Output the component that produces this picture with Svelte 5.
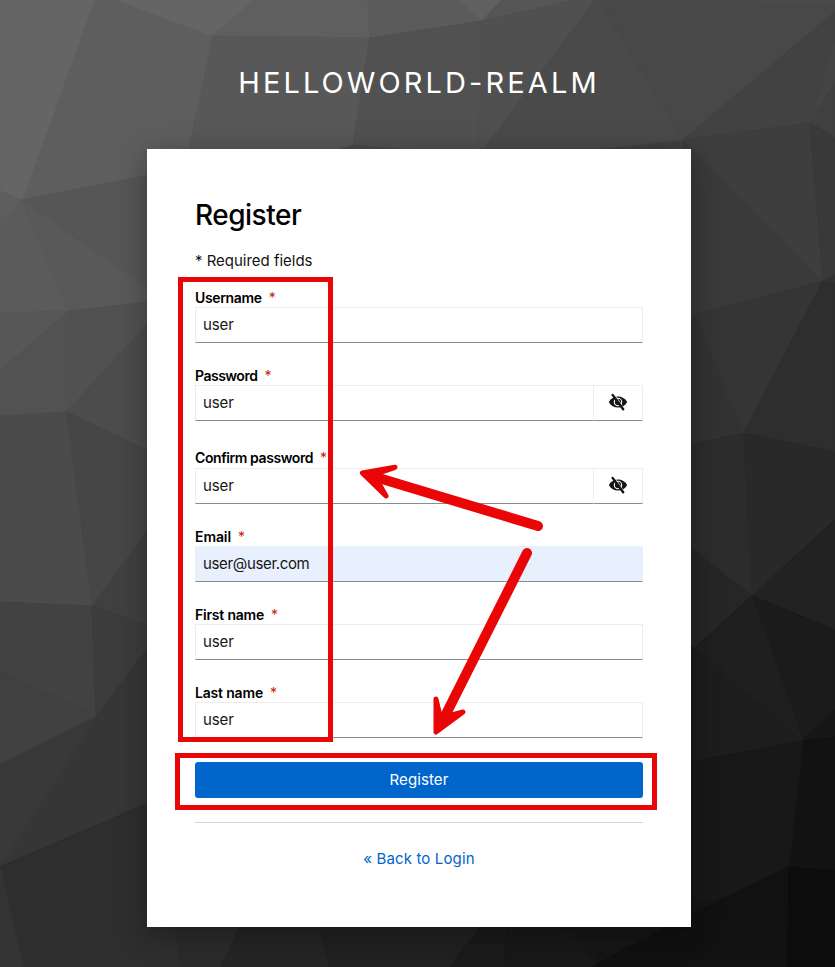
<script>
  const facets = [
    ['300,140 480,140 480,165 300,165', '#4a4a4a'],
    ['480,146 600,146 683,138 692,160 480,165', '#404040'],
    ['94,0 117,0 213,36 180,190 160,173 22,200', '#5e5e5e'],
    ['0,0 94,0 22,200 0,191', '#656565'],
    ['117,0 254,0 213,36', '#656565'],
    ['254,0 368,0 370,38 213,36', '#5f5f5f'],
    ['368,0 460,0 482,21 370,38', '#5b5b5b'],
    ['460,0 502,0 482,21', '#606060'],
    ['213,36 370,38 353,144 300,162 187,162', '#585858'],
    ['370,38 482,21 478,154 353,144', '#515151'],
    ['482,21 502,0 575,0', '#565656'],
    ['482,21 575,0 595,0 480,155 478,155', '#505050'],
    ['595,0 599,0 683,140 560,152 480,155', '#4a4a4a'],
    ['599,0 715,0 835,3 835,12 683,140', '#484848'],
    ['715,0 835,0 835,3', '#4b4b4b'],
    ['683,140 835,12 835,42 810,123', '#424242'],
    ['835,42 835,83 810,123', '#444444'],
    ['810,123 835,83 835,138', '#404040'],
    ['683,140 823,281 695,315 680,330 684,149', '#3a3a3a'],
    ['683,140 810,123 823,281', '#3e3e3e'],
    ['810,123 835,138 835,275 823,281', '#393939'],
    ['695,315 744,433 680,447 680,330', '#323232'],
    ['823,281 695,315 744,433', '#353535'],
    ['823,281 835,275 835,284', '#333333'],
    ['823,281 835,284 835,452 744,433', '#2e2e2e'],
    ['744,433 752,596 680,540 680,447', '#2c2c2c'],
    ['744,433 835,452 835,520 752,596', '#292929'],
    ['752,596 835,520 835,630', '#222222'],
    ['680,540 752,596 695,648 680,630', '#262626'],
    ['752,596 835,630 835,710 803,741', '#1b1b1b'],
    ['695,648 803,741 680,764 680,660', '#1d1d1d'],
    ['752,596 803,741 695,648', '#1f1f1f'],
    ['803,741 835,710 835,737', '#171717'],
    ['803,741 835,737 835,871 789,867', '#121212'],
    ['803,741 789,867 680,919 680,764', '#181818'],
    ['22,200 0,221 0,313 69,311', '#5b5b5b'],
    ['0,191 22,200 0,221', '#5e5e5e'],
    ['22,200 69,311 160,301 160,296', '#595959'],
    ['22,200 160,173 160,296', '#565656'],
    ['0,313 69,311 0,371', '#575757'],
    ['0,371 69,311 67,412 0,416', '#525252'],
    ['69,311 160,301 160,312 67,412', '#515151'],
    ['67,412 160,310 160,457', '#4c4c4c'],
    ['0,416 67,412 92,606 0,602', '#4b4b4b'],
    ['67,412 160,457 160,515 92,606', '#464646'],
    ['0,602 92,606 96,717 0,670', '#424242'],
    ['0,670 96,717 0,765', '#404040'],
    ['92,606 160,515 160,630', '#404040'],
    ['92,606 160,630 160,633 96,717', '#3c3c3c'],
    ['96,717 160,633 160,798 0,867', '#363636'],
    ['0,765 96,717 0,867', '#393939'],
    ['0,867 160,798 173,900 181,967 23,967', '#2e2e2e'],
    ['0,867 23,967 0,967', '#343434'],
    ['173,900 253,900 221,967 181,967', '#2b2b2b'],
    ['253,900 312,900 330,967 221,967', '#252525'],
    ['312,900 500,900 450,967 330,967', '#212121'],
    ['500,900 510,900 504,967 450,967', '#1b1b1b'],
    ['510,900 540,900 598,963 597,967 504,967', '#191919'],
    ['540,900 604,900 598,963', '#171717'],
    ['604,900 720,900 598,963', '#161616'],
    ['789,867 788,967 592,967 680,920', '#111111'],
    ['789,867 835,871 835,967 788,967', '#0d0d0d']
  ];

  const fields = [
    { label: 'Username', value: 'user', tracking: -0.35 },
    { label: 'Password', value: 'user', tracking: -0.5, secret: true },
    { label: 'Confirm password', value: 'user', tracking: -0.42, secret: true },
    { label: 'Email', value: 'user@user.com', tracking: -0.1, filled: true },
    { label: 'First name', value: 'user', tracking: -0.2 },
    { label: 'Last name', value: 'user', tracking: -0.18 }
  ];
</script>

<div class="page">
  <svg class="backdrop" viewBox="0 0 835 967" aria-hidden="true">
    {#each facets as [points, color]}
      <polygon {points} fill={color} stroke={color} stroke-width="1.2" stroke-linejoin="round" />
    {/each}
  </svg>

  <header>helloworld-realm</header>

  <main>
    <h1>Register</h1>
    <p class="required">* Required fields</p>
    <form onsubmit={(e) => e.preventDefault()}>
      {#each fields as f, i}
        <div class="group" class:confirm={i === 2}>
          <div class="label">
            <label for={'f' + i} style:letter-spacing={f.tracking + 'px'}>{f.label}</label><span class="star">*</span>
          </div>
          <div class="row">
            <input id={'f' + i} class:filled={f.filled} class:short={!f.filled} type="text" value={f.value} />
            {#if f.secret}
              <button class="eye" type="button" aria-label="Show password">
                <svg width="20" height="18" viewBox="0 0 20 18">
                  <path d="M.8 9C2.8 5.2 6.3 3.4 10 3.4S17.2 5.2 19.2 9C17.2 12.8 13.7 14.6 10 14.6S2.8 12.8.8 9Z" fill="#151515" />
                  <circle cx="10" cy="9" r="3.7" fill="none" stroke="#fff" stroke-width="1.1" />
                  <path d="M8.6 8.7A1.8 1.8 0 0 1 10.4 7.2" fill="none" stroke="#fff" stroke-width=".8" />
                  <path d="M6.5 1.2L16.5 16.2" stroke="#fff" stroke-width=".8" />
                  <path d="M4.6 1.9L15.2 16.2" stroke="#151515" stroke-width="2.4" stroke-linecap="round" />
                </svg>
              </button>
            {/if}
          </div>
        </div>
      {/each}
      <button class="submit" type="submit">Register</button>
    </form>
    <hr />
    <a href="#login">« Back to Login</a>
  </main>

  <svg class="marks" viewBox="0 0 835 967" aria-hidden="true">
    <g fill="none" stroke="#ea0606">
      <rect x="180.5" y="279.5" width="150" height="460" stroke-width="5" />
      <rect x="177.5" y="755.5" width="477" height="52" stroke-width="5" />
      <path d="M538 526L372 476" stroke-width="10" stroke-linecap="round" />
      <path d="M527 553L442 722" stroke-width="10" stroke-linecap="round" />
    </g>
    <g fill="#ea0606" stroke="#ea0606" stroke-width="5" stroke-linejoin="round">
      <path d="M362.3 473L395 467.3L379 473L377 480L386 496Z" />
      <path d="M436 732L436 699L440.5 718L448 716L463 712Z" />
    </g>
  </svg>
</div>

<style>
  :global(body) { margin: 0; }
  .page {
    position: relative;
    box-sizing: border-box;
    width: 835px;
    height: 967px;
    overflow: hidden;
    background: #1d1d1d;
    color: #151515;
    font-family: Inter, 'Open Sans', sans-serif;
    font-size: 16px;
  }
  .backdrop, .marks { position: absolute; inset: 0; width: 835px; height: 967px; }
  .marks { pointer-events: none; }
  header {
    position: relative;
    height: 149px;
    box-sizing: border-box;
    padding-top: 63px;
    padding-left: 3px;
    text-align: center;
    text-transform: uppercase;
    color: #fff;
    font-size: 29px;
    font-weight: 370;
    line-height: 40px;
    letter-spacing: 3.1px;
  }
  main {
    position: relative;
    box-sizing: border-box;
    width: 544px;
    height: 778px;
    margin-left: 147px;
    padding: 48px 48px 0;
    background: #fff;
    box-shadow: 0 10px 20px rgba(3, 3, 3, 0.13), 0 4px 32px rgba(3, 3, 3, 0.2);
    display: flex;
    flex-direction: column;
  }
  h1 {
    margin: 0;
    height: 36px;
    line-height: 37px;
    font-size: 28px;
    font-weight: 500;
    letter-spacing: -0.5px;
    color: #000;
  }
  .required { margin: 15px 0 0; height: 25px; line-height: 25px; font-size: 15px; letter-spacing: -0.02px; }
  form { display: flex; flex-direction: column; margin-top: 15px; }
  .group { height: 78px; }
  .group.confirm { height: 79px; margin-top: 4px; }
  .label { display: flex; height: 19px; line-height: 19px; font-size: 14px; }
  .confirm .label { height: 20px; }
  label { font-weight: 600; color: #000; }
  .star { color: #c9190b; margin-left: 7px; }
  .row { display: flex; height: 36px; }
  input {
    flex: 1;
    min-width: 0;
    box-sizing: border-box;
    height: 36px;
    padding: 0 7px 2px;
    border: 1px solid #ededed;
    border-bottom-color: #8a8d90;
    border-radius: 0;
    background: #fff;
    color: #151515;
    font: inherit;
    font-size: 15px;
    letter-spacing: -0.35px;
    outline: none;
  }
  input.short { letter-spacing: -0.1px; }
  input.filled { background: #e8f0fe; border-color: #e8f0fe; border-bottom-color: #8a8d90; }
  .eye {
    box-sizing: border-box;
    width: 50px;
    height: 36px;
    margin-left: -1px;
    padding: 0 0 2px;
    border: 1px solid #ededed;
    border-bottom-color: #8a8d90;
    background: #fff;
    display: flex;
    align-items: center;
    justify-content: center;
  }
  .submit {
    height: 36px;
    margin-top: 1px;
    padding: 0 0 2px;
    border: 0;
    border-radius: 3px;
    background: #06c;
    color: #fff;
    font: inherit;
    font-size: 15px;
    letter-spacing: 0.1px;
  }
  hr { width: 100%; height: 1px; margin: 24px 0 0; border: 0; background: #d2d2d2; }
  a { margin-top: 24px; line-height: 24px; text-align: center; color: #06c; text-decoration: none; font-size: 15px; letter-spacing: 0.14px; }
</style>
